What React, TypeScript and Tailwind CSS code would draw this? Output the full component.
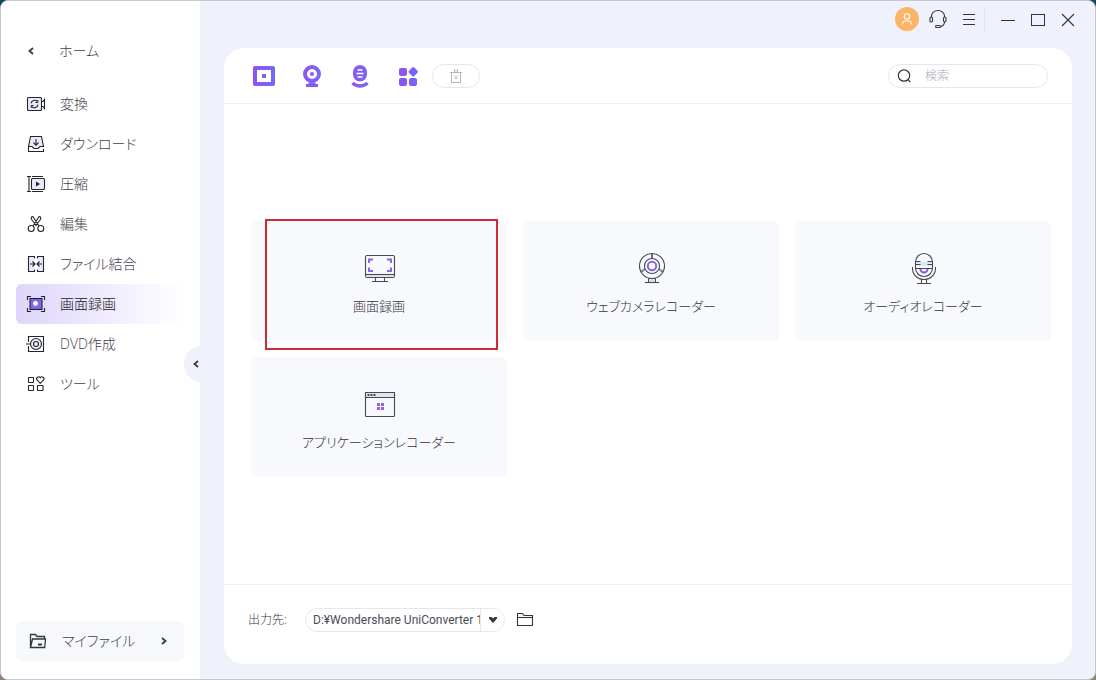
import type { ReactNode } from "react";

const NAV_ITEMS = [
  { label: "変換", icon: <ConvertIcon /> },
  { label: "ダウンロード", icon: <DownloadIcon /> },
  { label: "圧縮", icon: <CompressIcon /> },
  { label: "編集", icon: <ScissorsIcon /> },
  { label: "ファイル結合", icon: <MergeIcon /> },
  { label: "画面録画", icon: <RecordIcon />, active: true },
  { label: "DVD作成", icon: <DiscIcon /> },
  { label: "ツール", icon: <ToolsIcon /> },
];

const RECORDERS = [
  { label: "画面録画", icon: <MonitorIcon />, highlighted: true },
  { label: "ウェブカメラレコーダー", icon: <WebcamIcon /> },
  { label: "オーディオレコーダー", icon: <MicIcon /> },
  { label: "アプリケーションレコーダー", icon: <AppWindowIcon /> },
];

function NavIcon({ children }: { children: ReactNode }) {
  return (
    <svg
      className="size-5 shrink-0"
      viewBox="0 0 20 20"
      fill="none"
      stroke="#23252e"
      strokeWidth="1.1"
      aria-hidden="true"
    >
      {children}
    </svg>
  );
}

function ConvertIcon() {
  return (
    <NavIcon>
      <rect x="1.5" y="3.5" width="14" height="13" rx="1" fill="#e9eafa" />
      <path d="M15.500 7.500h1.500l1.500-2v9l-1.500-2h-1.500" />
      <path d="M5 9.300a3.700 3.700 0 0 1 6.300-1.900M12 10.700a3.700 3.700 0 0 1-6.300 1.900" />
      <path d="M11.800 6v2.500H9.500M5.200 14v-2.500h2.300" strokeWidth="1" />
    </NavIcon>
  );
}

function DownloadIcon() {
  return (
    <NavIcon>
      <path d="M2.500 12.500l2-10h11l2 10h-3.500l-2 2H8l-2-2z" fill="#e9eafa" />
      <path d="M2.500 12.500v5h15V15M10 5v6M7.400 8.600l2.600 2.600 2.600-2.600" />
    </NavIcon>
  );
}

function CompressIcon() {
  return (
    <NavIcon>
      <rect x="5.500" y="4.500" width="13" height="11" rx="1" fill="#e9eafa" />
      <path d="M1 2.500h4M1 17.500h4M3 2.500v15M6 2.500h11M6 17.500h11" />
      <path d="M10 7.500l4 2.500-4 2.500z" fill="#23252e" stroke="none" />
    </NavIcon>
  );
}

function ScissorsIcon() {
  return (
    <NavIcon>
      <circle cx="5.200" cy="14.500" r="3" />
      <circle cx="14.800" cy="14.500" r="3" />
      <path d="M7 12l6.200-9.500c1.600 0 2 1.700 1.200 3L9.500 12M13 12L6.800 2.500c-1.600 0-2 1.700-1.200 3L10.500 12" />
    </NavIcon>
  );
}

function MergeIcon() {
  return (
    <NavIcon>
      <path d="M8.500 4.500v-2h-6v15h6v-2M11.500 4.500v-2h6v15h-6v-2" fill="#e9eafa" />
      <path d="M4 10h4.500M6.500 7.500L9 10l-2.500 2.500M16 10h-4.500M13.500 7.500L11 10l2.500 2.500" />
    </NavIcon>
  );
}

function RecordIcon() {
  return (
    <NavIcon>
      <path d="M1.500 6V2.500H5M15 2.500h3.500V6M18.500 14v3.500H15M5 17.500H1.500V14" />
      <rect x="4" y="4.500" width="12" height="11" fill="#7d68f2" />
      <circle cx="9.500" cy="9.500" r="2.400" fill="#fff" stroke="none" />
    </NavIcon>
  );
}

function DiscIcon() {
  return (
    <NavIcon>
      <path d="M2.500 8V2.500h15v15h-15V12M0 10h4" />
      <circle cx="10" cy="10" r="5.500" fill="#e9eafa" />
      <circle cx="10" cy="10" r="2.500" />
    </NavIcon>
  );
}

function ToolsIcon() {
  return (
    <NavIcon>
      <rect x="2.500" y="3.500" width="5" height="5" rx="0.500" />
      <rect x="2.500" y="11.500" width="5" height="5" rx="0.500" />
      <rect x="11.500" y="11.500" width="5.500" height="5" rx="0.500" />
      <path d="M14.300 9.300l-3.300-3.300a1.900 1.900 0 0 1 3.300-2.300 1.900 1.900 0 0 1 3.300 2.300z" />
    </NavIcon>
  );
}

function CardIcon({ children }: { children: ReactNode }) {
  return (
    <svg
      className="size-8 overflow-visible"
      viewBox="-1 0 32 32"
      fill="none"
      stroke="#474955"
      strokeWidth="1.1"
      aria-hidden="true"
    >
      {children}
    </svg>
  );
}

function MonitorIcon() {
  return (
    <CardIcon>
      <rect x="1.500" y="3.500" width="29" height="22" rx="1.500" />
      <path d="M2 22.500h28v2.500H2z" fill="#e2e3eb" stroke="none" />
      <path d="M1.500 22.500h29" />
      <path d="M11.500 26v3.500M20.500 26v3.500M8 29.500h16" />
      <path
        d="M5 11V7.500h4M23 7.500h4V11M27 15.500v3.500h-4M9 19H5v-3.500"
        stroke="#8a62ee"
        strokeWidth="2"
      />
    </CardIcon>
  );
}

function WebcamIcon() {
  return (
    <CardIcon>
      <circle cx="16" cy="14" r="12.500" />
      <circle cx="16" cy="14" r="7.500" />
      <circle cx="16" cy="14" r="4.200" stroke="#8a62ee" strokeWidth="2" />
      <path
        d="M15.500 1.500v5M16.500 1.500v5M9.500 17.500l-4.500 3M9 16.500l-4.500 3M22.500 17.500l4.500 3M23 16.500l4.500 3"
        strokeWidth="0.800"
      />
      <path d="M12.500 26.500v4h7v-4z" fill="#dedfe8" strokeWidth="1" />
      <path d="M9 30.500h14" />
    </CardIcon>
  );
}

function MicIcon() {
  return (
    <CardIcon>
      <path d="M7.500 10h17v4h-17z" fill="#dceaf2" stroke="none" />
      <rect x="7.500" y="1.500" width="17" height="23" rx="8.500" />
      <path d="M7.500 9.500h5M19.500 9.500h5M7.500 12.500h5M19.500 12.500h5M7.500 16.500h17" />
      <path d="M12.500 17a3.500 3.500 0 0 0 7 0" stroke="#8a55e6" strokeWidth="2" />
      <path d="M4.500 15v1.500a11.500 11 0 0 0 23 0V15" />
      <path d="M13.500 27.500v4M18.500 27.500v4M9 31.500h14" />
    </CardIcon>
  );
}

function AppWindowIcon() {
  return (
    <CardIcon>
      <rect x="1.500" y="4.500" width="29" height="24" rx="1" />
      <path d="M1.500 4.500h29v5h-29z" fill="#e2e3eb" />
      <path d="M3.500 7h2M6.500 7h2M9.500 7h2" strokeWidth="2" />
      <path
        d="M13 15h3v3h-3zM17 15h3v3h-3zM13 19h3v3h-3zM17 19h3v3h-3z"
        fill="#9566d8"
        stroke="none"
      />
    </CardIcon>
  );
}

function ToolbarIcon({ children }: { children: ReactNode }) {
  return (
    <svg className="size-6" viewBox="0 0 24 24" fill="none" stroke="url(#violet)" aria-hidden="true">
      <defs>
        <linearGradient id="violet" gradientUnits="userSpaceOnUse" x1="0" y1="12" x2="24" y2="14">
          <stop stopColor="#9450ee" />
          <stop offset="1" stopColor="#6f6bfa" />
        </linearGradient>
      </defs>
      {children}
    </svg>
  );
}

const TOOLBAR = [
  {
    label: "画面録画",
    icon: (
      <>
        <rect x="3" y="4" width="18" height="16" strokeWidth="4" strokeLinejoin="round" />
        <rect x="10" y="10" width="4" height="4" fill="#8060f4" stroke="none" />
      </>
    ),
  },
  {
    label: "ウェブカメラ",
    icon: (
      <>
        <circle cx="12" cy="10" r="7" strokeWidth="4" />
        <circle cx="12" cy="10" r="2" fill="#7f60f4" stroke="none" />
        <path d="M8.500 18.500h7V20H18v3H6v-3h2.500z" fill="url(#violet)" stroke="none" />
      </>
    ),
  },
  {
    label: "オーディオ",
    icon: (
      <>
        <rect x="5" y="1" width="14" height="16.500" rx="7" fill="url(#violet)" stroke="none" />
        <path d="M9.500 6h5M8.500 9.500h7M9.500 13h5" stroke="#fff" strokeWidth="1.600" />
        <path d="M4.500 19c4.500 4 10.500 4 15 0" strokeWidth="3.500" />
      </>
    ),
  },
  {
    label: "アプリケーション",
    icon: (
      <g fill="url(#violet)" stroke="none">
        <rect x="3" y="4" width="8" height="8" rx="2" />
        <rect x="3" y="14" width="8" height="8" rx="2" />
        <rect x="13" y="14" width="8" height="8" rx="2" />
        <rect
          x="13.500"
          y="4"
          width="7.500"
          height="7.500"
          rx="1.500"
          transform="rotate(45 17.250 7.750)"
        />
      </g>
    ),
  },
];

function Chevron({ direction }: { direction: "left" | "right" }) {
  return (
    <svg
      className="size-2 shrink-0"
      viewBox="0 0 8 8"
      fill="none"
      stroke="#3c3f4a"
      strokeWidth="1.900"
      aria-hidden="true"
    >
      <path d={direction === "left" ? "M6 1L2.500 4 6 7" : "M2 1l3.500 3L2 7"} />
    </svg>
  );
}

function Sidebar() {
  return (
    <aside className="relative flex w-[199px] shrink-0 flex-col bg-white pr-4 pb-[18px] pl-[15px]">
      <a
        href="#home"
        className="mt-[30px] flex h-10 items-center gap-6 px-[11px] text-sm text-[#3f414c]"
      >
        <Chevron direction="left" />
        ホーム
      </a>
      <nav className="mt-[13px]">
        {NAV_ITEMS.map((item) => (
          <a
            key={item.label}
            href="#"
            aria-current={item.active ? "page" : undefined}
            className={
              item.active
                ? "flex h-10 items-center gap-3.5 rounded-md bg-gradient-to-r from-[#dfd5fb] to-white px-2.5 text-sm text-[#15161d]"
                : "flex h-10 items-center gap-3.5 rounded-md px-2.5 text-sm text-[#3f414c]"
            }
          >
            {item.icon}
            {item.label}
          </a>
        ))}
      </nav>
      <a
        href="#files"
        className="mt-auto flex h-10 items-center rounded-md bg-[#f7f8fc] px-3 pr-4 text-sm text-[#3f414c]"
      >
        <svg
          className="mr-3.5 size-5"
          viewBox="0 0 20 20"
          fill="none"
          stroke="#33353f"
          strokeWidth="1.300"
          aria-hidden="true"
        >
          <path d="M2.500 16.500v-13h5l1.500 2h7.500v2M2.500 16.500l2-8.500h13l-.8 8.500z" />
          <path d="M10 13.500h4" strokeWidth="2" />
        </svg>
        <span className="mr-auto">マイファイル</span>
        <Chevron direction="right" />
      </a>
      <button
        type="button"
        aria-label="サイドバーを閉じる"
        className="absolute top-[345px] -right-px flex h-9 w-[17px] items-center justify-end rounded-l-full bg-[#eff2fb] pr-px"
      >
        <Chevron direction="left" />
      </button>
    </aside>
  );
}

function TitleBar() {
  return (
    <header className="flex h-[47px] items-center justify-end pr-[19px] pb-[11px] text-[#33353f]">
      <button type="button" aria-label="アカウント" className="mr-[9px] rounded-full bg-[#fcb567]">
        <svg className="size-6" viewBox="0 0 24 24" fill="none" stroke="#fff" strokeWidth="1.100">
          <circle cx="12" cy="9.500" r="2.700" />
          <path d="M7.500 17.500v-1a3 3 0 0 1 3-2.500h3a3 3 0 0 1 3 2.500v1" />
        </svg>
      </button>
      <button type="button" aria-label="サポート" className="mr-[13px]">
        <svg className="size-5" viewBox="0 0 20 20" fill="none" stroke="currentColor" strokeWidth="1.100">
          <path d="M3.500 8V7a6.500 5.500 0 0 1 13 0v1M16.500 13c0 2.500-1.500 4-4 4.500" />
          <rect x="2" y="8" width="2.500" height="5" rx="1.200" />
          <rect x="15.500" y="8" width="2.500" height="5" rx="1.200" />
          <rect x="7.500" y="16.500" width="5" height="2" rx="1" />
        </svg>
      </button>
      <button type="button" aria-label="メニュー" className="mr-[7px]">
        <svg className="size-4" viewBox="0 0 16 16" stroke="currentColor" strokeWidth="1.100">
          <path d="M2 3.500h12M2 8.500h12M2 13.500h12" />
        </svg>
      </button>
      <div className="h-6 w-px bg-[#e2e5ef]" />
      <div className="flex gap-3.5 pl-[15px]">
        <button type="button" aria-label="最小化">
          <svg className="size-4" viewBox="0 0 16 16" stroke="currentColor">
            <path d="M1 9.500h14" />
          </svg>
        </button>
        <button type="button" aria-label="最大化">
          <svg className="size-4" viewBox="0 0 16 16" fill="none" stroke="currentColor">
            <rect x="1.500" y="3.500" width="13" height="11" />
          </svg>
        </button>
        <button type="button" aria-label="閉じる">
          <svg className="size-4" viewBox="0 0 16 16" stroke="currentColor" strokeWidth="1.100">
            <path d="M2 3l12 12M14 3L2 15" />
          </svg>
        </button>
      </div>
    </header>
  );
}

function Toolbar() {
  return (
    <div className="flex h-14 items-center border-b border-[#f0f1f4] pr-6 pl-7">
      <div className="flex gap-6">
        {TOOLBAR.map((tool) => (
          <button key={tool.label} type="button" aria-label={tool.label}>
            <ToolbarIcon>{tool.icon}</ToolbarIcon>
          </button>
        ))}
      </div>
      <button
        type="button"
        aria-label="削除"
        className="ml-3 flex h-6 w-12 items-center justify-center rounded-full border border-[#e6e7eb]"
      >
        <svg className="size-4" viewBox="0 0 16 16" fill="none" stroke="#b3b5bc">
          <path d="M2 4.500h12M6.500 4V2h3v2M3.500 5v9.500h9V5" />
          <path d="M6.200 7.700l3.600 3.600M9.800 7.700l-3.600 3.600" />
        </svg>
      </button>
      <label className="ml-auto flex h-6 w-40 items-center gap-3 rounded-full border border-[#e6e7eb] pr-3 pl-2">
        <svg
          className="size-4 shrink-0"
          viewBox="0 0 16 16"
          fill="none"
          stroke="#33353f"
          strokeWidth="1.200"
          aria-hidden="true"
        >
          <circle cx="7" cy="7.500" r="5.700" />
          <path d="M11 11.700l2.300 2.300" />
        </svg>
        <input
          type="search"
          aria-label="検索"
          placeholder="検索"
          className="w-full min-w-0 bg-transparent text-xs outline-none placeholder:text-[#a9abb8]"
        />
      </label>
    </div>
  );
}

function OutputBar() {
  return (
    <footer className="flex h-20 items-center border-t border-[#f0f1f4] pb-2.5 pl-6 text-xs text-[#33353f]">
      <label htmlFor="output" className="w-[57px]">
        出力先:
      </label>
      <div className="relative flex h-6 w-[200px] overflow-hidden rounded-full border border-[#e6e7eb]">
        <select
          id="output"
          className="w-full appearance-none overflow-hidden bg-transparent pr-6 pl-[7px] font-['Roboto','Noto_Sans_CJK_JP',sans-serif] font-normal text-[#4a4c57] outline-none"
        >
          <option>D:¥Wondershare UniConverter 14¥Screen Recorder</option>
        </select>
        <span className="pointer-events-none absolute inset-y-0 right-0 flex w-6 items-center justify-center border-l border-[#e6e7eb] bg-white">
          <svg className="h-1.5 w-2" viewBox="0 0 8 6" fill="#33353f" aria-hidden="true">
            <path d="M0 0h2.500L4 1.500 5.500 0H8v1.500L4 6 0 1.500z" />
          </svg>
        </span>
      </div>
      <button type="button" aria-label="フォルダーを開く" className="ml-2.5">
        <svg className="size-5" viewBox="0 0 20 20" fill="none" stroke="#33353f" strokeWidth="1.100">
          <path d="M2.500 15.500v-12h5l1.500 2h8.500v10z" />
          <path d="M2.500 7.500h15" />
        </svg>
      </button>
    </footer>
  );
}

export default function App() {
  return (
    <div className="min-h-screen bg-gradient-to-b from-[#174460] to-[#8b8578] font-['Open_Sans','Noto_Sans_CJK_JP',sans-serif] font-light [font-feature-settings:'palt']">
      <div className="flex min-h-screen overflow-hidden rounded-lg border border-[#c6c8ce] bg-[#eff2fb]">
        <Sidebar />
        <div className="flex min-w-0 flex-1 flex-col">
          <TitleBar />
          <main className="mr-[23px] mb-[15px] ml-6 flex flex-1 flex-col rounded-[20px] bg-white">
            <Toolbar />
            <div className="flex flex-1 flex-col justify-center pt-2.5 pr-[21px] pl-[27px]">
              <div className="grid grid-cols-3 gap-4">
                {RECORDERS.map((recorder) => (
                  <div key={recorder.label} className="relative">
                    <button
                      type="button"
                      className="flex h-[120px] w-full flex-col items-center gap-3 rounded-md bg-[#f8f9fd] pt-[31px] text-[13px] leading-5 text-[#33353f]"
                    >
                      {recorder.icon}
                      {recorder.label}
                    </button>
                    {recorder.highlighted && (
                      <div className="pointer-events-none absolute -top-0.5 right-[9px] -bottom-[9px] left-3.5 border-2 border-[#cf2a36]" />
                    )}
                  </div>
                ))}
              </div>
            </div>
            <OutputBar />
          </main>
        </div>
      </div>
    </div>
  );
}
